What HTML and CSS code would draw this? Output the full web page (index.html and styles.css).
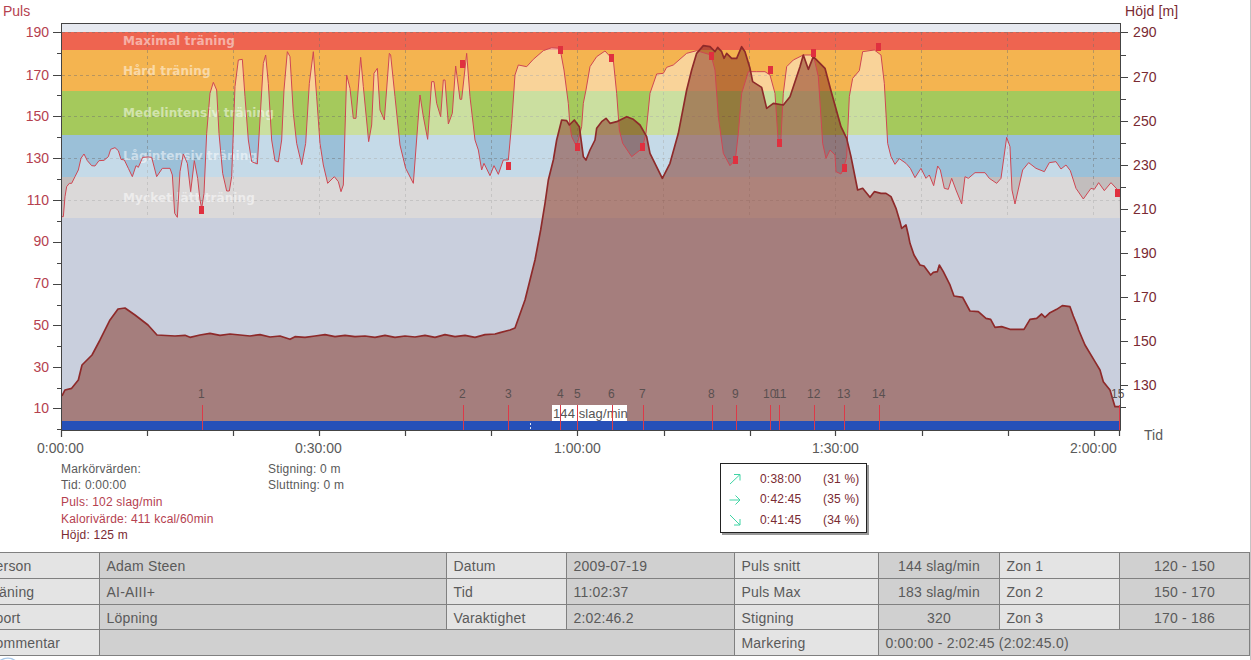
FILE: index.html
```html
<!DOCTYPE html>
<html lang="sv">
<head>
<meta charset="utf-8">
<title>Puls och höjd</title>
<link rel="stylesheet" href="styles.css">
</head>
<body>
<div class="page">
<svg class="chart" width="1250" height="458">
  <rect class="z-top" x="62" y="24" width="1058" height="8"/>
  <rect class="z-max" x="62" y="32" width="1058" height="18"/>
  <rect class="z-hard" x="62" y="50" width="1058" height="41"/>
  <rect class="z-med" x="62" y="91" width="1058" height="44"/>
  <rect class="z-low" x="62" y="135" width="1058" height="42"/>
  <rect class="z-easy" x="62" y="177" width="1058" height="41"/>
  <rect class="z-bg" x="62" y="218" width="1058" height="203"/>
  <path class="grid" d="M62 32.5H1120M62 75.5H1120M62 116.5H1120M62 158.5H1120M62 200.5H1120M147.5 32V218M233.5 32V218M319.5 32V218M405.5 32V218M491.5 32V218M577.5 32V218M663.5 32V218M749.5 32V218M835.5 32V218M921.5 32V218M1007.5 32V218M1093.5 32V218"/>
  <g class="curves">
    <polygon class="pulse-fill" points="185,650 190,650 195,590 200,560 208,550 215,550 225,530 235,510 243,475 252,462 262,482 275,497 285,498 297,482 312,481 325,470 332,448 345,443 355,452 363,478 373,480 385,505 397,530 408,497 415,502 428,472 445,471 455,472 470,530 487,505 510,505 517,525 524,640 532,652 540,515 550,462 562,490 572,575 583,482 593,535 600,600 605,625 612,580 620,400 630,280 640,247 650,270 657,400 668,520 680,573 688,573 695,530 705,260 715,180 727,178 735,290 745,420 755,485 772,492 780,360 790,190 797,165 805,250 815,420 825,482 835,486 845,420 852,270 862,155 870,170 880,340 890,430 905,494 917,430 928,250 940,155 950,290 960,430 970,495 983,550 1003,530 1015,545 1023,575 1030,555 1040,225 1050,265 1060,355 1068,355 1082,172 1090,260 1106,425 1115,375 1122,220 1132,205 1140,330 1153,360 1168,160 1172,165 1185,290 1200,435 1217,505 1240,550 1260,285 1270,350 1283,418 1295,245 1302,245 1310,310 1322,350 1330,240 1335,240 1345,372 1357,340 1367,198 1380,298 1385,298 1400,160 1410,290 1425,420 1435,450 1445,510 1452,490 1470,527 1482,497 1495,523 1510,480 1525,480 1535,370 1545,225 1555,195 1580,200 1600,178 1630,152 1655,143 1680,145 1692,210 1705,310 1710,380 1715,410 1730,440 1745,380 1750,310 1758,270 1770,200 1790,170 1815,153 1840,180 1850,280 1858,390 1868,430 1895,470 1927,445 1938,400 1950,280 1970,222 1990,220 2000,202 2020,195 2060,160 2090,152 2133,165 2145,210 2155,350 2170,460 2190,497 2206,480 2215,400 2225,280 2245,215 2270,215 2295,215 2310,225 2325,280 2335,430 2342,430 2350,280 2360,200 2380,180 2410,165 2440,165 2455,230 2468,430 2478,475 2490,450 2505,465 2508,515 2523,522 2531,505 2540,470 2543,400 2548,290 2558,235 2578,212 2588,155 2623,150 2643,165 2653,250 2663,430 2673,470 2685,493 2698,476 2718,490 2731,505 2745,533 2763,505 2778,535 2788,525 2801,557 2813,498 2821,510 2833,565 2845,568 2855,535 2868,570 2885,612 2895,530 2905,535 2925,518 2955,518 2968,535 2990,550 3003,535 3020,412 3030,440 3036,570 3045,612 3068,510 3086,488 3108,505 3133,515 3148,488 3168,485 3183,507 3198,495 3211,512 3228,565 3250,597 3273,565 3283,568 3296,548 3313,572 3333,548 3358,575 3360,654 186,654"/>
  </g>
  <text class="zone-label" x="123" y="45">Maximal träning</text>
  <text class="zone-label" x="123" y="75">Hård träning</text>
  <text class="zone-label" x="123" y="117">Medelintensiv träning</text>
  <text class="zone-label" x="123" y="160">Lågintensiv träning</text>
  <text class="zone-label" x="123" y="202">Mycket lätt träning</text>
  <g class="curves">
    <polygon class="alt-fill" points="186,1188 195,1170 215,1165 235,1140 246,1095 276,1065 300,1020 330,960 354,927 375,924 405,945 444,975 471,1005 525,1008 555,1006 570,1012 600,1005 630,1000 660,1006 690,1002 720,1005 750,1008 780,1004 810,1011 840,1008 870,1018 885,1010 915,1012 945,1008 975,1004 1005,1010 1035,1006 1065,1010 1095,1008 1125,1012 1155,1006 1185,1012 1215,1008 1245,1011 1275,1006 1305,1012 1335,1004 1365,1010 1395,1006 1425,1012 1455,1004 1485,1002 1500,998 1530,990 1545,984 1575,900 1605,780 1622,690 1635,610 1645,540 1660,480 1670,420 1685,360 1700,362 1708,375 1723,360 1738,380 1750,470 1758,480 1770,450 1785,420 1790,385 1805,365 1818,355 1830,370 1850,365 1880,350 1900,358 1920,375 1940,410 1950,460 1987,535 2010,490 2035,400 2060,270 2075,210 2090,160 2110,137 2130,140 2145,155 2153,142 2165,155 2172,175 2180,160 2195,175 2210,175 2225,140 2235,155 2250,205 2258,245 2285,262 2300,325 2320,310 2350,315 2370,290 2400,200 2410,165 2425,208 2440,170 2475,205 2495,280 2523,380 2540,415 2553,470 2573,570 2588,565 2610,592 2623,575 2643,580 2658,580 2673,590 2688,625 2700,665 2705,685 2718,675 2725,705 2730,730 2742,765 2760,795 2772,798 2792,825 2800,817 2812,815 2818,795 2830,815 2850,855 2862,888 2888,892 2910,933 2935,935 2958,955 2972,958 2985,982 3005,980 3030,988 3072,988 3090,958 3110,955 3125,942 3135,952 3150,938 3170,928 3187,917 3210,920 3220,948 3233,980 3236,990 3255,1035 3285,1085 3300,1110 3310,1145 3330,1170 3345,1220 3358,1220 3358,1263 186,1263"/>
    <polyline class="pulse-line" points="185,650 190,650 195,590 200,560 208,550 215,550 225,530 235,510 243,475 252,462 262,482 275,497 285,498 297,482 312,481 325,470 332,448 345,443 355,452 363,478 373,480 385,505 397,530 408,497 415,502 428,472 445,471 455,472 470,530 487,505 510,505 517,525 524,640 532,652 540,515 550,462 562,490 572,575 583,482 593,535 600,600 605,625 612,580 620,400 630,280 640,247 650,270 657,400 668,520 680,573 688,573 695,530 705,260 715,180 727,178 735,290 745,420 755,485 772,492 780,360 790,190 797,165 805,250 815,420 825,482 835,486 845,420 852,270 862,155 870,170 880,340 890,430 905,494 917,430 928,250 940,155 950,290 960,430 970,495 983,550 1003,530 1015,545 1023,575 1030,555 1040,225 1050,265 1060,355 1068,355 1082,172 1090,260 1106,425 1115,375 1122,220 1132,205 1140,330 1153,360 1168,160 1172,165 1185,290 1200,435 1217,505 1240,550 1260,285 1270,350 1283,418 1295,245 1302,245 1310,310 1322,350 1330,240 1335,240 1345,372 1357,340 1367,198 1380,298 1385,298 1400,160 1410,290 1425,420 1435,450 1445,510 1452,490 1470,527 1482,497 1495,523 1510,480 1525,480 1535,370 1545,225 1555,195 1580,200 1600,178 1630,152 1655,143 1680,145 1692,210 1705,310 1710,380 1715,410 1730,440 1745,380 1750,310 1758,270 1770,200 1790,170 1815,153 1840,180 1850,280 1858,390 1868,430 1895,470 1927,445 1938,400 1950,280 1970,222 1990,220 2000,202 2020,195 2060,160 2090,152 2133,165 2145,210 2155,350 2170,460 2190,497 2206,480 2215,400 2225,280 2245,215 2270,215 2295,215 2310,225 2325,280 2335,430 2342,430 2350,280 2360,200 2380,180 2410,165 2440,165 2455,230 2468,430 2478,475 2490,450 2505,465 2508,515 2523,522 2531,505 2540,470 2543,400 2548,290 2558,235 2578,212 2588,155 2623,150 2643,165 2653,250 2663,430 2673,470 2685,493 2698,476 2718,490 2731,505 2745,533 2763,505 2778,535 2788,525 2801,557 2813,498 2821,510 2833,565 2845,568 2855,535 2868,570 2885,612 2895,530 2905,535 2925,518 2955,518 2968,535 2990,550 3003,535 3020,412 3030,440 3036,570 3045,612 3068,510 3086,488 3108,505 3133,515 3148,488 3168,485 3183,507 3198,495 3211,512 3228,565 3250,597 3273,565 3283,568 3296,548 3313,572 3333,548 3358,575"/>
    <polyline class="alt-line" points="186,1188 195,1170 215,1165 235,1140 246,1095 276,1065 300,1020 330,960 354,927 375,924 405,945 444,975 471,1005 525,1008 555,1006 570,1012 600,1005 630,1000 660,1006 690,1002 720,1005 750,1008 780,1004 810,1011 840,1008 870,1018 885,1010 915,1012 945,1008 975,1004 1005,1010 1035,1006 1065,1010 1095,1008 1125,1012 1155,1006 1185,1012 1215,1008 1245,1011 1275,1006 1305,1012 1335,1004 1365,1010 1395,1006 1425,1012 1455,1004 1485,1002 1500,998 1530,990 1545,984 1575,900 1605,780 1622,690 1635,610 1645,540 1660,480 1670,420 1685,360 1700,362 1708,375 1723,360 1738,380 1750,470 1758,480 1770,450 1785,420 1790,385 1805,365 1818,355 1830,370 1850,365 1880,350 1900,358 1920,375 1940,410 1950,460 1987,535 2010,490 2035,400 2060,270 2075,210 2090,160 2110,137 2130,140 2145,155 2153,142 2165,155 2172,175 2180,160 2195,175 2210,175 2225,140 2235,155 2250,205 2258,245 2285,262 2300,325 2320,310 2350,315 2370,290 2400,200 2410,165 2425,208 2440,170 2475,205 2495,280 2523,380 2540,415 2553,470 2573,570 2588,565 2610,592 2623,575 2643,580 2658,580 2673,590 2688,625 2700,665 2705,685 2718,675 2725,705 2730,730 2742,765 2760,795 2772,798 2792,825 2800,817 2812,815 2818,795 2830,815 2850,855 2862,888 2888,892 2910,933 2935,935 2958,955 2972,958 2985,982 3005,980 3030,988 3072,988 3090,958 3110,955 3125,942 3135,952 3150,938 3170,928 3187,917 3210,920 3220,948 3233,980 3236,990 3255,1035 3285,1085 3300,1110 3310,1145 3330,1170 3345,1220 3358,1220"/>
  </g>
  <rect class="z-band" x="62" y="421" width="1058" height="9"/>
  <path class="band-dash" d="M530.5 423V429"/>
  <rect class="tip-box" x="552" y="405" width="75" height="16"/>
  <text class="tip-text" x="553" y="418">144 slag/min</text>
  <path class="marker-line" d="M202.5 405V430M463.5 405V430M508.5 405V430M560.5 405V430M577.5 405V430M612.5 405V430M643.5 405V430M712.5 405V430M736.5 405V430M770.5 405V430M779.5 405V430M814.5 405V430M844.5 405V430M879.5 405V430M1119.5 405V430"/>
  <g class="markers">
    <rect x="199" y="206" width="5" height="8"/><rect x="460" y="60" width="5" height="8"/><rect x="506" y="162" width="5" height="8"/><rect x="558" y="46" width="5" height="8"/><rect x="575" y="143" width="5" height="8"/><rect x="609" y="54" width="5" height="8"/><rect x="640" y="143" width="5" height="8"/><rect x="709" y="52" width="5" height="8"/><rect x="733" y="156" width="5" height="8"/><rect x="768" y="66" width="5" height="8"/><rect x="777" y="139" width="5" height="8"/><rect x="811" y="49" width="5" height="8"/><rect x="842" y="164" width="5" height="8"/><rect x="876" y="43" width="5" height="8"/><rect x="1115" y="189" width="5" height="8"/>
  </g>
  <g class="mark-num">
    <text x="198" y="398">1</text><text x="459" y="398">2</text><text x="505" y="398">3</text><text x="557" y="398">4</text><text x="574" y="398">5</text><text x="608" y="398">6</text><text x="639" y="398">7</text><text x="708" y="398">8</text><text x="732" y="398">9</text><text x="763" y="398">10</text><text x="774" y="398">11</text><text x="807" y="398">12</text><text x="837" y="398">13</text><text x="872" y="398">14</text><text x="1111" y="398">15</text>
  </g>
  <path class="frame" d="M61.5 24V430.5H1120.5V24M61 23.5H1121"/>
  <path class="ticks" d="M53 32.5H62M57 53.5H62M53 75.5H62M57 95.5H62M53 116.5H62M57 137.5H62M53 158.5H62M57 179.5H62M53 200.5H62M57 221.5H62M53 242.5H62M57 263.5H62M53 284.5H62M57 305.5H62M53 325.5H62M57 346.5H62M53 367.5H62M57 388.5H62M53 408.5H62M57 429.5H62M1121 32.5H1128M1121 55.5H1126M1121 77.5H1128M1121 99.5H1126M1121 121.5H1128M1121 143.5H1126M1121 165.5H1128M1121 187.5H1126M1121 209.5H1128M1121 231.5H1126M1121 253.5H1128M1121 275.5H1126M1121 297.5H1128M1121 319.5H1126M1121 341.5H1128M1121 363.5H1126M1121 385.5H1128M1121 407.5H1126M61.5 430V437M147.5 430V436M233.5 430V436M319.5 430V436M405.5 430V436M491.5 430V436M577.5 430V436M664.5 430V436M750.5 430V436M835.5 430V436M922.5 430V436M1008.5 430V436M1094.5 430V436M1119.5 430V436"/>
  <g class="axis-left">
    <text x="3" y="16" class="start">Puls</text>
    <text x="49" y="37">190</text><text x="49" y="80">170</text><text x="49" y="121">150</text><text x="49" y="163">130</text><text x="49" y="205">110</text><text x="49" y="246">90</text><text x="49" y="288">70</text><text x="49" y="330">50</text><text x="49" y="372">30</text><text x="49" y="413">10</text>
  </g>
  <g class="axis-right">
    <text x="1125" y="16">Höjd [m]</text>
    <text x="1133" y="37">290</text><text x="1133" y="82">270</text><text x="1133" y="126">250</text><text x="1133" y="170">230</text><text x="1133" y="214">210</text><text x="1133" y="258">190</text><text x="1133" y="302">170</text><text x="1133" y="346">150</text><text x="1133" y="390">130</text>
  </g>
  <g class="axis-x">
    <text x="37" y="453">0:00:00</text><text x="295" y="453">0:30:00</text><text x="554" y="453">1:00:00</text><text x="812" y="453">1:30:00</text><text x="1070" y="453">2:00:00</text><text x="1144" y="440">Tid</text>
  </g>
</svg>
<section class="info">
  <div class="readout">
    <div>Markörvärden:</div>
    <div>Tid: 0:00:00</div>
    <div class="red">Puls: 102 slag/min</div>
    <div class="red">Kalorivärde: 411 kcal/60min</div>
    <div class="maroon">Höjd: 125 m</div>
  </div>
  <div class="slope">
    <div>Stigning: 0 m</div>
    <div>Sluttning: 0 m</div>
  </div>
  <div class="legend">
    <svg class="arrow" width="12" height="12" viewBox="0 0 12 12"><path d="M1 11 11 1.5M5 1.5H11V7.5"/></svg><span>0:38:00</span><span>(31 %)</span>
    <svg class="arrow" width="12" height="12" viewBox="0 0 12 12"><path d="M0.5 6H11M6.5 1.5 11 6 6.5 10.5"/></svg><span>0:42:45</span><span>(35 %)</span>
    <svg class="arrow" width="12" height="12" viewBox="0 0 12 12"><path d="M1 1 11 11M5 11H11V5"/></svg><span>0:41:45</span><span>(34 %)</span>
  </div>
</section>
<table class="summary">
  <colgroup><col class="c1"><col class="c2"><col class="c3"><col class="c4"><col class="c5"><col class="c6"><col class="c7"><col class="c8"></colgroup>
  <tr class="r1"><td class="l">Person</td><td class="v">Adam Steen</td><td class="l">Datum</td><td class="v">2009-07-19</td><td class="l">Puls snitt</td><td class="v mid">144 slag/min</td><td class="l">Zon 1</td><td class="v mid">120 - 150</td></tr>
  <tr class="r1"><td class="l">Träning</td><td class="v">AI-AIII+</td><td class="l">Tid</td><td class="v">11:02:37</td><td class="l">Puls Max</td><td class="v mid">183 slag/min</td><td class="l">Zon 2</td><td class="v mid">150 - 170</td></tr>
  <tr class="r2"><td class="l">Sport</td><td class="v">Löpning</td><td class="l">Varaktighet</td><td class="v">2:02:46.2</td><td class="l">Stigning</td><td class="v mid">320</td><td class="l">Zon 3</td><td class="v mid">170 - 186</td></tr>
  <tr class="r1"><td class="l">Kommentar</td><td class="v" colspan="3"></td><td class="l">Markering</td><td class="v" colspan="3">0:00:00 - 2:02:45 (2:02:45.0)</td></tr>
</table>
<svg class="corner" width="18" height="4"><path d="M0 3.5C5 0.5 11 0.5 15 3.5"/></svg>
</div>
</body>
</html>
```
FILE: styles.css
```css
html, body { margin: 0; padding: 0; background: #fff; }
body { overflow: hidden; font-family: "Liberation Sans", Arial, sans-serif; color: #5a5a5a; }
.page { width: 1250px; height: 660px; border-right: 1px solid #c4c4c4; overflow: hidden; }

.chart { display: block; font-family: "Liberation Sans", Arial, sans-serif; }
.z-top { fill: #e6e9f0; }
.z-max { fill: #ee6450; }
.z-hard { fill: #f4b450; }
.z-med { fill: #a5c95c; }
.z-low { fill: #9bc0d8; }
.z-easy { fill: #c2bdbd; }
.z-bg { fill: #c9cfdd; }
.z-band { fill: #2650b8; }
.zone-label { font: bold 12px "DejaVu Sans", sans-serif; letter-spacing: .1px; fill: rgba(255,255,255,.5); }
.curves { transform: scale(.33333); }
.pulse-fill { fill: rgba(255,255,255,.42); }
.alt-fill { fill: rgba(130,45,30,.5); }
.pulse-line { fill: none; stroke: #cf4652; stroke-width: 3; stroke-linejoin: round; }
.alt-line { fill: none; stroke: #8e2a2a; stroke-width: 5; stroke-linejoin: round; }
.grid { fill: none; stroke: rgba(110,110,110,.45); stroke-width: 1; stroke-dasharray: 3 3; }
.band-dash { fill: none; stroke: #dfe6f5; stroke-width: 1; stroke-dasharray: 2 2; }
.tip-box { fill: #fff; }
.tip-text { font-size: 13px; letter-spacing: .1px; fill: #555; }
.marker-line { fill: none; stroke: #dc3a48; stroke-width: 1; }
.markers rect { fill: #e0303f; }
.mark-num text { font-size: 12px; fill: #5a5050; }
.frame { fill: none; stroke: #444; stroke-width: 1; }
.ticks { fill: none; stroke: #444; stroke-width: 1.2; }
.axis-left text { font-size: 14px; fill: #b5414f; text-anchor: end; }
.axis-left text.start { text-anchor: start; }
.axis-right text { font-size: 14px; letter-spacing: .15px; fill: #7a2a32; }
.axis-x text { font-size: 14px; fill: #5a5a5a; }

.info { display: flex; align-items: flex-start; height: 94px; padding-left: 61px; font-size: 12px; letter-spacing: .2px; line-height: 16.7px; }
.readout { width: 207px; padding-top: 2.5px; }
.slope { width: 452px; padding-top: 2.5px; }
.red { color: #b5414f; }
.maroon { color: #7a2a32; }
.legend {
  display: grid; grid-template-columns: 31px 63px 42px; grid-auto-rows: 20.5px; align-items: center;
  margin-top: 5px; width: 147px; height: 70px; box-sizing: border-box; padding: 5px 0 0 8px;
  border: 1px solid #222; box-shadow: 2px 2px 0 #999; background: #fff; color: #7a2a32;
}
.arrow { fill: none; stroke: #3fd4a4; stroke-width: 1; }

.summary { table-layout: fixed; border-collapse: collapse; width: 1273px; margin-left: -24px; font-size: 14px; letter-spacing: .2px; color: #5a5a5a; }
.summary td { border: 1px solid #808080; padding: 1px 6.5px 0; white-space: nowrap; }
.summary td:first-child { padding-left: 9px; }
.c1 { width: 123px; } .c2 { width: 347px; } .c3 { width: 120px; } .c4 { width: 168px; }
.c5 { width: 144px; } .c6 { width: 121px; } .c7 { width: 120px; } .c8 { width: 130px; }
.r1 { height: 26px; } .r2 { height: 25px; }
.l { background: #e4e4e4; }
.v { background: #d0d0d0; }
.mid { text-align: center; }
.corner { display: block; margin-top: 1px; }
.corner path { fill: none; stroke: #a8c8e8; stroke-width: 1.5; }
```
